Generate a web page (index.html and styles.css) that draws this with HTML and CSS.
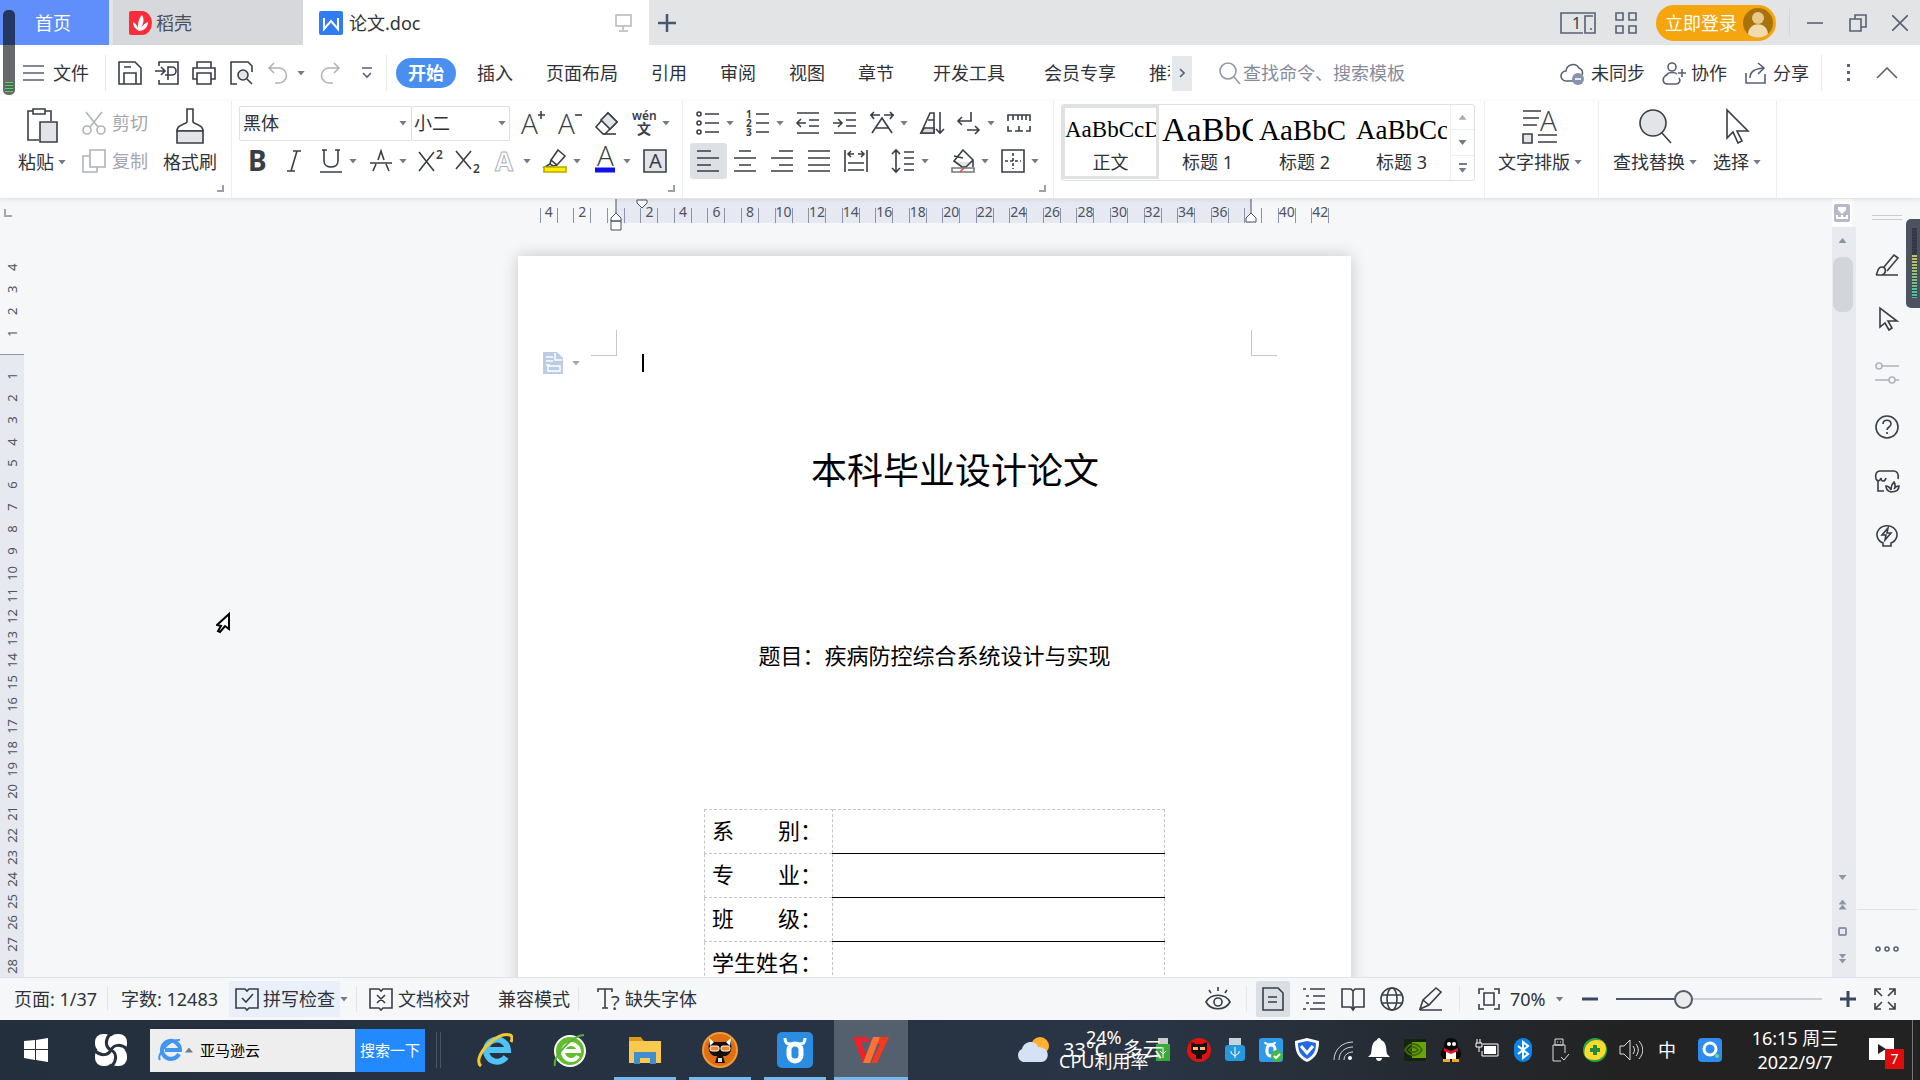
FILE: index.html
```html
<!DOCTYPE html>
<html lang="zh-CN">
<head>
  <meta charset="UTF-8">
  <meta name="viewport" content="width=device-width, initial-scale=1.0">
  <title>论文.doc</title>
  <link rel="stylesheet" href="styles.css">
</head>
<body>
  <!-- window tabs -->
  <header class="tabbar">
    <button type="button" class="tab home">首页</button>
    <button type="button" class="tab docer">
      <svg width="23" height="24" viewBox="0 0 23 24"><path d="M2 0h11a10 12 0 0 1 0 24H2a2 2 0 0 1-2-2V2a2 2 0 0 1 2-2z" fill="#fb2c3b"/><path d="M10 20C6 18 4 15 4 11c2 1 4 3 5 6 0-6 1-10 4-13 3 5 1 9-1 13 2-3 4-5 7-6 0 5-4 9-9 9z" fill="#fff"/></svg>
      稻壳
    </button>
    <button type="button" class="tab active">
      <svg width="24" height="24" viewBox="0 0 24 24"><rect width="24" height="24" rx="2" fill="#2f7df0"/><path d="M5 7v11l7-8 7 8V7" fill="none" stroke="#fff" stroke-width="2"/></svg>
      <span>论文.doc</span>
      <svg class="monitor" width="17" height="18" viewBox="0 0 17 18"><path d="M1 1h15v11H1zM8 12v4M4 17h9" fill="none" stroke="#b4b7bd" stroke-width="1.5"/></svg>
    </button>
    <button type="button" class="newtab" aria-label="新建">
      <svg width="18" height="18" viewBox="0 0 18 18"><path d="M9 0v18M0 9h18" stroke="#4a5670" stroke-width="2.5"/></svg>
    </button>
    <div class="window-tools">
      <button type="button" aria-label="窗口"><svg width="36" height="24" viewBox="0 0 36 24" class="line"><path d="M23 22H1V2h34v20H25V5h8M30 18h2"/><text x="12" y="18" class="t16">1</text></svg></button>
      <button type="button" class="grid" aria-label="应用"><svg width="22" height="22" viewBox="0 0 22 22" class="line"><path d="M1 1h7v7H1zM14 1h7v7h-7zM1 14h7v7H1zM14 14h7v7h-7z"/></svg></button>
      <button type="button" class="login">立即登录
        <svg width="30" height="30" viewBox="0 0 30 30"><circle cx="15" cy="15" r="15" fill="#a8730a"/><circle cx="15" cy="10" r="6" fill="#e9c98a"/><path d="M5 26c1-13 19-13 20 0a15 15 0 0 1-20 0z" fill="#f2dcae"/></svg>
      </button>
      <button type="button" class="minimize" aria-label="最小化"><svg width="16" height="20" viewBox="0 0 16 20" class="line"><path d="M0 10h16"/></svg></button>
      <button type="button" class="restore" aria-label="还原"><svg width="18" height="20" viewBox="0 0 18 20" class="line"><path d="M1 6h11v12H1zM6 6V2h11v12h-5"/></svg></button>
      <button type="button" class="close" aria-label="关闭"><svg width="16" height="16" viewBox="0 0 16 16" class="line"><path d="M0 0l16 16M16 0L0 16"/></svg></button>
    </div>
  </header>

  <!-- menu -->
  <nav class="menubar">
    <button type="button" class="file">
      <svg width="21" height="16" viewBox="0 0 21 16" class="line"><path d="M0 1h21M0 8h21M0 15h21"/></svg>
      文件
    </button>
    <div class="quick">
      <button type="button" aria-label="保存"><svg class="ic" viewBox="0 0 24 24"><path d="M1 1h16l6 6v16H1zM6 23V12h12v11M6 6h7"/></svg></button>
      <button type="button" aria-label="输出为PDF"><svg class="ic" viewBox="0 0 24 24"><path d="M4 5V1h19v22H4v-4M0 10h9M6 6l4 4-4 4M13 19V6h4a4 4 0 0 1 0 8h-7"/></svg></button>
      <button type="button" aria-label="打印"><svg class="ic" viewBox="0 0 24 24"><path d="M5 7V1h14v6M5 18H1V7h22v11h-4M5 12h14v11H5z"/></svg></button>
      <button type="button" aria-label="打印预览"><svg class="ic" viewBox="0 0 24 24"><path d="M8 23H2V1h17l4 4v6M18 18l5 5"/><circle cx="14" cy="14" r="5" fill="#e2e4e8"/></svg></button>
      <button type="button" class="undo" aria-label="撤销"><svg class="ic off" viewBox="0 0 24 24"><path d="M8 2L3 7l5 5M3 7h10a7 7 0 0 1 0 15H9"/></svg></button>
      <i class="caret"></i>
      <button type="button" class="redo" aria-label="恢复"><svg class="ic off" viewBox="0 0 24 24"><path d="M16 2l5 5-5 5M21 7H11a7 7 0 0 0 0 15h4"/></svg></button>
      <button type="button" class="more" aria-label="自定义"><svg width="12" height="12" viewBox="0 0 12 12" class="line"><path d="M1 1h10M2 6l4 4 4-4"/></svg></button>
    </div>
    <div class="menus">
      <button type="button" class="current">开始</button>
      <button type="button">插入</button>
      <button type="button">页面布局</button>
      <button type="button">引用</button>
      <button type="button">审阅</button>
      <button type="button">视图</button>
      <button type="button">章节</button>
      <button type="button" class="wide">开发工具</button>
      <button type="button" class="wide">会员专享</button>
      <button type="button" class="cut">推荐</button>
      <button type="button" class="next" aria-label="更多选项卡"><svg width="6" height="10" viewBox="0 0 6 10" class="line"><path d="M1 1l4 4-4 4"/></svg></button>
    </div>
    <div class="finder">
      <svg width="22" height="24" viewBox="0 0 22 24" class="line"><circle cx="9" cy="10" r="8"/><path d="M15 16l6 7"/></svg>
      <input type="text" aria-label="查找" placeholder="查找命令、搜索模板">
    </div>
    <div class="cloud">
      <button type="button"><svg width="26" height="24" viewBox="0 0 26 24" class="line"><path d="M13 20H6a5 5 0 0 1 0-10 7 7 0 0 1 13-3 5 5 0 0 1 3 7"/><circle cx="18" cy="18" r="6" fill="#8593ad" stroke="none"/><path d="M15 18h6" stroke="#fff"/></svg>未同步</button>
      <button type="button"><svg width="24" height="24" viewBox="0 0 24 24" class="line"><circle cx="10" cy="6" r="4"/><path d="M5 13c2-2 8-2 10 0M17 17c2 3 0 6-3 6H5c-4 0-5-5-2-8l3-2M16 12h8M20 8v8"/></svg>协作</button>
      <button type="button"><svg width="24" height="24" viewBox="0 0 24 24" class="line"><path d="M2 12v10h19V13M6 17c0-7 5-9 13-10M14 2l6 5-6 6"/></svg>分享</button>
    </div>
    <div class="fold">
      <button type="button" aria-label="更多"><svg width="4" height="20" viewBox="0 0 4 20"><path d="M1 1h3v3H1zM1 8h3v3H1zM1 15h3v3H1z" fill="#5b6270"/></svg></button>
      <button type="button" aria-label="收起功能区"><svg width="22" height="12" viewBox="0 0 22 12" class="line"><path d="M1 11L11 1l10 10"/></svg></button>
    </div>
  </nav>

  <!-- ribbon -->
  <section class="ribbon">
    <div class="group clipboard">
      <button type="button" class="big">
        <svg width="36" height="36" viewBox="0 0 36 36" class="ico"><path d="M9 3H4v29h11M21 3h6v10"/><path d="M9 1h12v5H9z"/><path d="M16 14h17v20H16z" fill="#e2e4e8"/></svg>
        <span>粘贴<i class="caret"></i></span>
      </button>
      <div class="pair">
        <button type="button"><svg class="ic off" viewBox="0 0 24 24"><circle cx="5" cy="19" r="4"/><circle cx="19" cy="19" r="4"/><path d="M4 1l12 15M20 1L8 16"/></svg>剪切</button>
        <button type="button"><svg class="ic off" viewBox="0 0 24 24"><path d="M8 1h15v17H8zM8 7H1v16h14v-5"/></svg>复制</button>
      </div>
      <button type="button" class="big">
        <svg width="36" height="36" viewBox="0 0 36 36" class="ico"><path d="M15 1h6v13c2 3 10 2 10 9H5c0-7 8-6 10-9z"/><path d="M5 23h26v12H5z" fill="#e2e4e8"/></svg>
        <span>格式刷</span>
      </button>
      <i class="corner"></i>
    </div>

    <div class="group font">
      <div class="tools">
        <div class="combo name"><select aria-label="字体"><option>黑体</option></select><i class="caret"></i></div>
        <div class="combo size"><select aria-label="字号"><option>小二</option></select><i class="caret"></i></div>
        <button type="button" class="tool" aria-label="增大字号"><svg class="ic" viewBox="0 0 24 24"><text x="0" y="23" class="thin">A</text><path d="M17 4h7M20 0v8"/></svg></button>
        <button type="button" class="tool" aria-label="减小字号"><svg class="ic" viewBox="0 0 24 24"><text x="0" y="23" class="thin">A</text><path d="M17 4h7"/></svg></button>
        <button type="button" class="tool" aria-label="清除格式"><svg class="ic" viewBox="0 0 24 24"><path d="M13 2l9 9-12 12H8l-7-7z"/><path d="M13 2l9 9-7 7-9-9z" fill="#e2e4e8"/><path d="M8 23h13"/></svg></button>
        <button type="button" class="tool drop" aria-label="拼音指南"><svg class="ic" viewBox="0 0 24 24"><text x="0" y="9" class="t12">wén</text><text x="5" y="23" class="t14">文</text></svg><i class="caret"></i></button>
      </div>
      <div class="tools">
        <button type="button" class="tool" aria-label="加粗"><svg class="ic" viewBox="0 0 24 24"><text x="3" y="22" class="bold">B</text></svg></button>
        <button type="button" class="tool" aria-label="倾斜"><svg class="ic" viewBox="0 0 24 24"><path d="M11 2h8M5 22h8M15 2L9 22"/></svg></button>
        <button type="button" class="tool drop" aria-label="下划线"><svg class="ic" viewBox="0 0 24 24"><path d="M3 1h5M16 1h5M5 1v11c0 8 14 8 14 0V1M1 23h22"/></svg><i class="caret"></i></button>
        <button type="button" class="tool drop" aria-label="删除线"><svg class="ic" viewBox="0 0 24 24"><path d="M4 22l3-7M17 15l3 7M9 11l3-9 3 9M1 14h22"/></svg><i class="caret"></i></button>
        <button type="button" class="tool" aria-label="上标"><svg class="ic" viewBox="0 0 24 24"><path d="M0 3l15 19M15 3L0 22"/><text x="17" y="10" class="t12">2</text></svg></button>
        <button type="button" class="tool" aria-label="下标"><svg class="ic" viewBox="0 0 24 24"><path d="M0 2l15 18M15 2L0 20"/><text x="17" y="24" class="t12">2</text></svg></button>
        <button type="button" class="tool drop" aria-label="文字效果"><svg class="ic" viewBox="0 0 24 24"><text x="2" y="22" class="outline">A</text></svg><i class="caret"></i></button>
        <button type="button" class="tool drop" aria-label="突出显示"><svg class="ic" viewBox="0 0 24 24"><path d="M15 1l7 6-8 9-6-5zM8 11l-1 4 3 2 4-1M7 15l-5 3h7"/><path d="M1 18h22v5H1z" fill="#ffee00" stroke="#b9a900"/></svg><i class="caret"></i></button>
        <button type="button" class="tool drop" aria-label="字体颜色"><svg class="ic" viewBox="0 0 24 24"><text x="4" y="17" class="thin">A</text><path d="M2 21h20" stroke="#1010e8" stroke-width="5"/></svg><i class="caret"></i></button>
        <button type="button" class="tool" aria-label="字符底纹"><svg class="ic" viewBox="0 0 24 24"><path d="M1 1h22v22H1z" fill="#e2e4e8"/><text x="6" y="19" class="t20">A</text></svg></button>
      </div>
      <i class="corner"></i>
    </div>

    <div class="group para">
      <div class="tools">
        <button type="button" class="tool drop" aria-label="项目符号"><svg class="ic" viewBox="0 0 24 24"><circle cx="3" cy="3" r="2"/><circle cx="3" cy="12" r="2"/><circle cx="3" cy="21" r="2"/><path d="M9 3h14M9 12h14M9 21h14"/></svg><i class="caret"></i></button>
        <button type="button" class="tool drop" aria-label="编号"><svg class="ic" viewBox="0 0 24 24"><text x="0" y="7" class="t10">1</text><text x="0" y="16" class="t10">2</text><text x="0" y="25" class="t10">3</text><path d="M10 3h13M10 12h13M10 21h13"/></svg><i class="caret"></i></button>
        <button type="button" class="tool" aria-label="减少缩进"><svg class="ic" viewBox="0 0 24 24"><path d="M1 2h22M13 9h10M13 15h10M1 22h22M1 12h9M5 8l-4 4 4 4"/></svg></button>
        <button type="button" class="tool" aria-label="增加缩进"><svg class="ic" viewBox="0 0 24 24"><path d="M1 2h22M13 9h10M13 15h10M1 22h22M0 12h9M5 8l4 4-4 4"/></svg></button>
        <button type="button" class="tool drop" aria-label="中文版式"><svg class="ic" viewBox="0 0 24 24"><path d="M0 4h10M4 1L1 4l3 4M14 4h10M20 1l3 3-3 4M2 22L12 7l10 15M6 17h12"/></svg><i class="caret"></i></button>
        <button type="button" class="tool" aria-label="排序"><svg class="ic" viewBox="0 0 24 24"><path d="M1 22L10 2h4v20z"/><path d="M4 17h10v5H1z" fill="#d5d8dd"/><path d="M8 9h6M20 1v21M16 18l4 4 4-4"/></svg></button>
        <button type="button" class="tool drop" aria-label="显示段落标记"><svg class="ic" viewBox="0 0 24 24"><path d="M14 1v9H1M5 6l-4 4 4 4M10 19h12M18 15l4 4-4 4"/></svg><i class="caret"></i></button>
        <button type="button" class="tool" aria-label="制表位"><svg class="ic" viewBox="0 0 24 24"><path d="M1 10V4h22v6M6 4v5M11 4v5M15 4v5M19 4v5M1 15v5h4M8 20h8M12 15v5M19 20h4v-5"/></svg></button>
      </div>
      <div class="tools">
        <button type="button" class="tool on" aria-label="左对齐"><svg class="ic" viewBox="0 0 24 24"><path d="M1 2h14M1 9h22M1 16h14M1 22h22"/></svg></button>
        <button type="button" class="tool" aria-label="居中对齐"><svg class="ic" viewBox="0 0 24 24"><path d="M6 2h12M1 9h22M6 16h12M1 22h22"/></svg></button>
        <button type="button" class="tool" aria-label="右对齐"><svg class="ic" viewBox="0 0 24 24"><path d="M9 2h14M1 9h22M9 16h14M1 22h22"/></svg></button>
        <button type="button" class="tool" aria-label="两端对齐"><svg class="ic" viewBox="0 0 24 24"><path d="M1 2h22M1 9h22M1 16h22M1 22h22"/></svg></button>
        <button type="button" class="tool" aria-label="分散对齐"><svg class="ic" viewBox="0 0 24 24"><path d="M1 1v22M23 1v22M4 5h6M7 2L4 5l3 3M14 5h6M17 2l3 3-3 3M4 14h16M4 21h16"/></svg></button>
        <i class="bar"></i>
        <button type="button" class="tool drop" aria-label="行距"><svg class="ic" viewBox="0 0 24 24"><path d="M5 1v22M1 5l4-4 4 4M1 19l4 4 4-4M13 3h10M13 9h10M13 15h10M13 21h10"/></svg><i class="caret"></i></button>
        <i class="bar"></i>
        <button type="button" class="tool drop" aria-label="底纹颜色"><svg class="ic" viewBox="0 0 24 24"><path d="M5 13h17l-7 5h-5z" fill="#e2e4e8" stroke="none"/><path d="M12 1l10 10-7 7h-4l-8-6zM3 7l9 2M22 11v7"/><path d="M1 19h22v4H1z" fill="#fff" stroke="#777"/><path d="M9 23l4-4" stroke="#e04848"/></svg><i class="caret"></i></button>
        <button type="button" class="tool drop" aria-label="边框"><svg class="ic" viewBox="0 0 24 24"><path d="M1 1h22v22H1z"/><path d="M12 4v16M4 12h16" stroke-dasharray="3 2"/></svg><i class="caret"></i></button>
      </div>
      <i class="corner"></i>
    </div>

    <div class="group styles">
      <div class="gallery">
        <button type="button" class="style chosen"><b class="s1">AaBbCcDd</b><span>正文</span></button>
        <button type="button" class="style"><b class="s2">AaBbCc</b><span>标题 1</span></button>
        <button type="button" class="style"><b class="s3">AaBbC</b><span>标题 2</span></button>
        <button type="button" class="style"><b class="s4">AaBbCc</b><span>标题 3</span></button>
        <div class="spin">
          <button type="button" aria-label="上一行"><i class="caret up"></i></button>
          <button type="button" aria-label="下一行"><i class="caret"></i></button>
          <button type="button" class="all" aria-label="全部样式"><i class="caret"></i></button>
        </div>
      </div>
    </div>

    <div class="group layout">
      <button type="button" class="big">
        <svg width="36" height="36" viewBox="0 0 36 36" class="ico"><path d="M1 3h18M1 10h16M1 17h14M16 27h19M16 34h19"/><path d="M1 26h9v9H1z" fill="#e2e4e8"/><text x="18" y="23" class="thin">A</text></svg>
        <span>文字排版<i class="caret"></i></span>
      </button>
    </div>
    <div class="group edit">
      <button type="button" class="big">
        <svg width="36" height="36" viewBox="0 0 36 36" class="ico"><circle cx="16" cy="15" r="13" fill="#e2e4e8"/><path d="M25 25l9 10"/></svg>
        <span>查找替换<i class="caret"></i></span>
      </button>
      <button type="button" class="big">
        <svg width="36" height="36" viewBox="0 0 36 36" class="ico"><path d="M8 2v28l6-6 5 11 4-2-5-10h11z"/></svg>
        <span>选择<i class="caret"></i></span>
      </button>
    </div>
  </section>

  <!-- document -->
  <main class="editor">
    <div class="vruler">
      <svg width="8" height="8" viewBox="0 0 8 8"><path d="M1 0v7h7" fill="none" stroke="#a3a7b0" stroke-width="2"/></svg>
      <div class="outer"><span>4</span><span>3</span><span>2</span><span>1</span></div>
      <div class="inner">
        <span>1</span><span>2</span><span>3</span><span>4</span><span>5</span><span>6</span><span>7</span>
        <span>8</span><span>9</span><span>10</span><span>11</span><span>12</span><span>13</span><span>14</span>
        <span>15</span><span>16</span><span>17</span><span>18</span><span>19</span><span>20</span><span>21</span>
        <span>22</span><span>23</span><span>24</span><span>25</span><span>26</span><span>27</span><span>28</span>
      </div>
    </div>

    <div class="canvas">
      <div class="hruler">
        <span>4</span><span>2</span><span></span><span>2</span><span>4</span><span>6</span><span>8</span><span>10</span>
        <span>12</span><span>14</span><span>16</span><span>18</span><span>20</span><span>22</span><span>24</span><span>26</span>
        <span>28</span><span>30</span><span>32</span><span>34</span><span>36</span><span></span><span>40</span><span>42</span>
        <svg class="mark left" width="12" height="32" viewBox="0 0 12 32"><path d="M6 0v15M1 22v-3l5-5 5 5v3zM1 22h10v9H1z"/></svg>
        <svg class="mark first" width="12" height="10" viewBox="0 0 12 10"><path d="M1 1h10v3L6 9 1 4z"/></svg>
        <svg class="mark right" width="12" height="24" viewBox="0 0 12 24"><path d="M6 0v15M1 23v-4l5-5 5 5v4z"/></svg>
      </div>
      <article class="page">
        <i class="crop tl"></i><i class="crop tr"></i>
        <button type="button" class="outline-btn" aria-label="目录">
          <svg width="20" height="22" viewBox="0 0 20 22"><path d="M0 0h14l6 6v16H0z" fill="#bccbe6"/><path d="M3 5h7M3 9h7M3 13h4M12 1v7h7M5 14h12v5H5z" fill="none" stroke="#fff" stroke-width="1.5"/></svg>
          <i class="caret"></i>
        </button>
        <i class="beam"></i>
        <h1>本科毕业设计论文</h1>
        <p>题目：疾病防控综合系统设计与实现</p>
        <table>
          <tr><th><div><span>系</span><span>别：</span></div></th><td></td></tr>
          <tr><th><div><span>专</span><span>业：</span></div></th><td></td></tr>
          <tr><th><div><span>班</span><span>级：</span></div></th><td></td></tr>
          <tr><th><div><span>学生姓名：</span></div></th><td></td></tr>
        </table>
      </article>
    </div>

    <div class="scroll">
      <button type="button" class="ruler-btn" aria-label="标尺"><svg width="16" height="18" viewBox="0 0 16 18"><rect width="16" height="18" rx="2" fill="#b5b9ca"/><path d="M4 3h8v3l-4 4-4-4zM2 11h2v2h3v-2h2v2h3v-2h2v4H2z" fill="#fff"/></svg></button>
      <div class="track">
        <button type="button" aria-label="向上"><i class="caret up"></i></button>
        <div class="thumb"></div>
        <div class="jump">
          <button type="button" aria-label="向下"><i class="caret"></i></button>
          <button type="button" aria-label="前一页"><i class="caret up"></i><i class="caret up"></i></button>
          <button type="button" aria-label="选择浏览对象"><i class="box"></i></button>
          <button type="button" aria-label="下一页"><i class="caret"></i><i class="caret"></i></button>
        </div>
      </div>
    </div>

    <aside class="side">
      <i class="grip"></i>
      <button type="button" aria-label="样式"><svg class="ic" viewBox="0 0 24 24"><path d="M1 22h22M1 22c2-2 1-8 6-8 4 0 5 6 0 8M9 14L19 2l4 3-11 13"/></svg></button>
      <button type="button" aria-label="选择"><svg class="ic" viewBox="0 0 24 24"><path d="M5 1v19l5-4 4 7 3-2-4-7h9z"/></svg></button>
      <button type="button" aria-label="属性"><svg class="ic off" viewBox="0 0 24 24"><circle cx="4" cy="5" r="3"/><circle cx="17" cy="19" r="3"/><path d="M7 5h17M0 19h14M20 19h4"/></svg></button>
      <button type="button" aria-label="帮助"><svg class="ic" viewBox="0 0 24 24"><circle cx="12" cy="12" r="11"/><path d="M8 9c0-5 8-5 8 0 0 3-4 3-4 6M12 17v2"/></svg></button>
      <button type="button" aria-label="稻壳资源"><svg class="ic" viewBox="0 0 24 24"><path d="M3 12v10h6M23 10c1-5-1-8-4-8H5C1 2 0 6 1 10c2 3 4 2 5-1 0 4 4 4 5 0M16 23c-4-1-5-4-5-6 3 0 4 2 5 4 0-4 1-6 3-8 2 3 1 6 0 7 1-2 2-3 5-3 0 4-3 6-8 6z"/></svg></button>
      <button type="button" aria-label="推荐"><svg class="ic" viewBox="0 0 24 24"><path d="M8 20a10 9 0 1 1 8 0v3H8zM13 5l-6 7h4l-1 5 6-7h-4z"/></svg></button>
      <button type="button" class="dots" aria-label="更多"><svg width="26" height="8" viewBox="0 0 26 8" class="line"><circle cx="4" cy="4" r="2"/><circle cx="13" cy="4" r="2"/><circle cx="22" cy="4" r="2"/></svg></button>
    </aside>
  </main>

  <!-- status bar -->
  <footer class="status">
    <span class="page-no">页面: 1/37</span>
    <span class="words">字数: 12483</span>
    <button type="button" class="spell"><svg class="ic" viewBox="0 0 24 24"><path d="M1 2h9l2 2 2-2h9v19h-9l-2 2-2-2H1zM7 11l4 4 7-8"/></svg>拼写检查</button>
    <i class="caret"></i>
    <button type="button" class="proof"><svg class="ic" viewBox="0 0 24 24"><path d="M1 2h9l2 2 2-2h9v19h-9l-2 2-2-2H1zM8 8l8 8M16 8l-8 8"/></svg>文档校对</button>
    <span class="compat">兼容模式</span>
    <button type="button" class="missing"><svg class="ic" viewBox="0 0 24 24"><path d="M1 5V2h14v3M8 2v19M5 21h6"/><text x="14" y="23" class="t20">?</text></svg>缺失字体</button>

    <div class="views">
      <button type="button" aria-label="护眼模式"><svg class="ic" viewBox="0 0 24 24"><path d="M0 15c5-9 19-9 24 0-5 9-19 9-24 0zM3 3l2 3M12 0v4M21 3l-2 3"/><circle cx="12" cy="15" r="4"/></svg></button>
      <i class="bar"></i>
      <button type="button" class="on" aria-label="页面视图"><svg class="ic" viewBox="0 0 24 24"><path d="M2 1h15l5 5v17H2zM7 10h9M7 15h9"/></svg></button>
      <button type="button" aria-label="大纲"><svg class="ic" viewBox="0 0 24 24"><path d="M1 2h3M8 2h15M4 9h3M11 9h12M4 16h3M11 16h12M1 22h3M8 22h15"/></svg></button>
      <button type="button" aria-label="阅读版式"><svg class="ic" viewBox="0 0 24 24"><path d="M1 2h9l2 2 2-2h9v18h-9l-2 3-2-3H1zM12 4v18"/></svg></button>
      <button type="button" aria-label="Web版式"><svg class="ic" viewBox="0 0 24 24"><circle cx="12" cy="12" r="11"/><ellipse cx="12" cy="12" rx="5" ry="11"/><path d="M2 8h20M2 16h20"/></svg></button>
      <button type="button" aria-label="写作模式"><svg class="ic" viewBox="0 0 24 24"><path d="M1 23h22M1 22l3-9L17 1l5 4L10 18zM4 13l6 5"/></svg></button>
      <i class="bar"></i>
      <button type="button" aria-label="最佳显示比例"><svg class="ic" viewBox="0 0 24 24"><path d="M2 7V2h5M17 2h5v5M22 17v5h-5M7 22H2v-5M7 6h10v12H7z"/></svg></button>
    </div>
    <button type="button" class="percent">70%<i class="caret"></i></button>
    <button type="button" class="zoom-btn" aria-label="缩小"><svg width="16" height="16" viewBox="0 0 16 16"><path d="M0 8h16" stroke="#3b4762" stroke-width="3"/></svg></button>
    <input type="range" aria-label="显示比例" min="0" max="100" value="31">
    <button type="button" class="zoom-btn" aria-label="放大"><svg width="16" height="16" viewBox="0 0 16 16"><path d="M0 8h16M8 0v16" stroke="#3b4762" stroke-width="3"/></svg></button>
    <button type="button" class="expand" aria-label="全屏"><svg class="ic" viewBox="0 0 24 24"><path d="M2 8V2h6M2 2l7 7M16 2h6v6M22 2l-7 7M22 16v6h-6M22 22l-7-7M8 22H2v-6M2 22l7-7"/></svg></button>
  </footer>

  <!-- windows taskbar -->
  <div class="taskbar">
    <button type="button" class="start" aria-label="开始"><svg width="24" height="24" viewBox="0 0 24 24"><path d="M0 3l11-1v9H0zM12 2l12-2v11H12zM0 12h11v10L0 20zM12 12h12v12l-12-2z" fill="#fff"/></svg></button>
    <button type="button" class="swirl" aria-label="助手">
      <svg width="34" height="34" viewBox="0 0 34 34">
        <rect x="1" y="1" width="18" height="18" rx="8" fill="#fff"/><rect x="15" y="1" width="18" height="18" rx="8" fill="#fff"/>
        <rect x="1" y="15" width="18" height="18" rx="8" fill="#fff"/><rect x="15" y="15" width="18" height="18" rx="8" fill="#fff"/>
        <path d="M17 17c-6-3-6-10-1-16M17 17c3-6 10-6 16-1M17 17c6 3 6 10 1 16M17 17c-3 6-10 6-16 1" fill="none" stroke="#263241" stroke-width="3"/>
      </svg>
    </button>
    <form class="search">
      <svg width="24" height="24" viewBox="0 0 24 24"><path d="M21 16a9 9 0 1 1 1-4H7" fill="none" stroke="#3f97f2" stroke-width="4"/><path d="M2 22C-2 17 11 1 22 2" fill="none" stroke="#3f97f2" stroke-width="2"/></svg>
      <i class="caret up"></i>
      <input type="text" aria-label="搜索" value="亚马逊云">
      <button type="button">搜索一下</button>
    </form>
    <i class="split"></i>
    <div class="apps">
      <button type="button" aria-label="Internet Explorer"><svg width="36" height="36" viewBox="0 0 36 36"><path d="M29 25a11 11 0 1 1 2-7H11" fill="none" stroke="#4fc3f3" stroke-width="6"/><path d="M4 34C-6 26 20-2 33 3c3 1 2 5 1 7" fill="none" stroke="#f6c62f" stroke-width="3"/></svg></button>
      <button type="button" aria-label="浏览器"><svg width="36" height="36" viewBox="0 0 36 36"><circle cx="18" cy="19" r="15" fill="#62bf2b" stroke="#fff" stroke-width="2"/><path d="M26 24a8 8 0 1 1 1-5H12" fill="none" stroke="#fff" stroke-width="4"/><path d="M3 34C0 25 21 3 32 3" fill="none" stroke="#56b13a" stroke-width="2"/></svg></button>
      <button type="button" class="open" aria-label="文件资源管理器"><svg width="36" height="36" viewBox="0 0 36 36"><path d="M2 6h12l3 3h17v22H2z" fill="#fbc94f"/><path d="M2 5h12l2 4H2z" fill="#dc9a16"/><path d="M7 32V20h22v12h-6v-6H13v6z" fill="#3f8fd0"/></svg></button>
      <button type="button" class="open" aria-label="录屏"><svg width="36" height="36" viewBox="0 0 36 36"><circle cx="18" cy="18" r="17" fill="#e0700f" stroke="#f59a3a" stroke-width="2"/><path d="M8 8l5 2h10l5-2c3 8 1 14-4 16h-3l2 7H13l2-7h-3C7 22 5 16 8 8z" fill="#15100d"/><path d="M7 6l5 4-4 4zM29 6l-5 4 4 4z" fill="#fff"/><rect x="8" y="14" width="9" height="5" rx="2" fill="#f58a2c" stroke="#fff"/><rect x="19" y="14" width="9" height="5" rx="2" fill="#f58a2c" stroke="#fff"/><path d="M16 26h4v4h-4z" fill="#ddd"/></svg></button>
      <button type="button" class="open" aria-label="驱动"><svg width="36" height="36" viewBox="0 0 36 36"><rect width="36" height="36" rx="5" fill="#2b8de2"/><path d="M8 6c0 5 2 6 5 6h10c3 0 5-1 5-6" fill="none" stroke="#fff" stroke-width="3"/><rect x="12" y="12" width="12" height="17" rx="6" fill="none" stroke="#fff" stroke-width="5"/></svg></button>
      <button type="button" class="open focus" aria-label="WPS"><svg width="36" height="36" viewBox="0 0 36 36"><path d="M0 5h14l3 5h-9l5 12-3 9z" fill="#f0212a"/><path d="M24 5h12L24 31h-6l9-19h-4z" fill="#f5391f"/><path d="M20 5h7L17 31h-7z" fill="#ff7235"/></svg></button>
    </div>
    <div class="weather">
      <svg width="34" height="28" viewBox="0 0 34 28"><circle cx="24" cy="10" r="9" fill="#ffb02e"/><path d="M7 26a7 7 0 0 1-1-13c2-9 14-9 16-2 13 0 12 15 3 15z" fill="#d5e1f5"/></svg>
      <span class="temp">33°C&nbsp;&nbsp; 多云</span>
      <div class="cpu"><span>24%</span><span>CPU利用率</span></div>
    </div>
    <div class="tray">
      <button type="button" aria-label="USB"><svg viewBox="0 0 24 24"><path d="M7 0h10v6H7z" fill="#ccc"/><path d="M5 6h14v17H5z" fill="#3aa83a"/><path d="M12 9v11M9 13l3 3 3-3" fill="none" stroke="#fff"/></svg></button>
      <button type="button" aria-label="录屏"><svg viewBox="0 0 24 24"><circle cx="12" cy="12" r="12" fill="#e5110e"/><path d="M4 4l5 2h6l5-2v7c0 5-3 5-5 6v4H9v-4c-2-1-5-1-5-6z" fill="#15100d"/><path d="M6 9h5v3H6zM13 9h5v3h-5z" fill="#ffb765"/></svg></button>
      <button type="button" aria-label="U盘"><svg viewBox="0 0 24 24"><path d="M6 0h12v7H6z" fill="#c5d3dd"/><rect x="2" y="7" width="20" height="16" rx="3" fill="#2698de"/><path d="M12 9v11M8 13v2l4 3 4-3v-2" fill="none" stroke="#fff"/></svg></button>
      <button type="button" aria-label="驱动"><svg viewBox="0 0 24 24"><rect width="24" height="24" rx="3" fill="#2d9be9"/><path d="M6 4c0 3 10 3 10 0" fill="none" stroke="#fff" stroke-width="2"/><rect x="8" y="7" width="8" height="11" rx="4" fill="none" stroke="#fff" stroke-width="3"/><circle cx="18" cy="18" r="6" fill="#42b649"/><path d="M15 18l2 2 4-4" fill="none" stroke="#fff" stroke-width="2"/></svg></button>
      <button type="button" aria-label="安全"><svg viewBox="0 0 24 24"><path d="M12 0l12 3c0 11-3 17-12 21C3 20 0 14 0 3z" fill="#fff"/><path d="M12 3l9 2c0 8-2 12-9 16C5 17 3 13 3 5z" fill="#2469e5"/><path d="M6 8l6 7 6-7" fill="none" stroke="#fff" stroke-width="3"/></svg></button>
      <button type="button" aria-label="无线网络"><svg viewBox="0 0 24 24"><path d="M3 22C3 12 11 4 22 4M8 22c0-8 6-13 14-13M13 22c0-5 4-8 9-8" fill="none" stroke="#d5d8dc"/><circle cx="19" cy="20" r="2" fill="#fff"/></svg></button>
      <button type="button" aria-label="通知"><svg viewBox="0 0 24 24"><path d="M12 0c1 0 2 1 2 2 6 2 5 10 6 14l3 3H1l3-3c1-4 0-12 6-14 0-1 1-2 2-2zM9 20h6c0 4-6 4-6 0z" fill="#fff"/></svg></button>
      <button type="button" aria-label="NVIDIA"><svg viewBox="0 0 24 24"><path d="M1 1h22v22H1z" fill="#15240f"/><path d="M9 4h14v16H9z" fill="#68a500"/><path d="M2 12c5-8 12-8 17 0-5 7-12 7-17 0zM6 12c3-4 6-4 9 0-3 3-6 3-9 0z" fill="none" stroke="#42680c" stroke-width="2"/></svg></button>
      <button type="button" aria-label="QQ"><svg viewBox="0 0 24 24"><path d="M12 0c6 0 7 5 7 9 4 6 4 8 2 10l-3 4H6l-3-4c-2-2-2-4 2-10 0-4 1-9 7-9z" fill="#0a0a0a"/><path d="M7 13h10v8H7z" fill="#fff"/><path d="M5 10l7 3 7-3v3l-7 3-7-3z" fill="#e8131b"/><circle cx="10" cy="6" r="2" fill="#fff"/><circle cx="15" cy="6" r="2" fill="#fff"/><path d="M4 21h7v3H4zM13 21h7v3h-7z" fill="#f5a91d"/></svg></button>
      <button type="button" aria-label="电池"><svg viewBox="0 0 24 24"><path d="M8 6h15v12H7v-5M2 1v4M5 1v4M1 5h6v4H1zM4 9v5" fill="none" stroke="#fff"/><path d="M9 8h12v8H9z" fill="#fff"/></svg></button>
      <button type="button" aria-label="蓝牙"><svg viewBox="0 0 24 24"><rect x="3" width="18" height="24" rx="9" fill="#0a84e8"/><path d="M7 8l10 8-5 4V4l5 4-10 8" fill="none" stroke="#fff" stroke-width="2"/></svg></button>
      <button type="button" aria-label="弹出硬件"><svg viewBox="0 0 24 24"><path d="M8 1h8v6H8zM14 23H6V7h12v8M14 19l3 3 5-6M10 4h1M13 4h1" fill="none" stroke="#ddd"/></svg></button>
      <button type="button" aria-label="杀毒"><svg viewBox="0 0 24 24"><circle cx="12" cy="12" r="12" fill="#29a546"/><path d="M2 18C-1 8 8-1 19 3c8 6 3 19-7 19-4 0-8-1-10-4z" fill="#ffd92e"/><path d="M12 7v10M7 12h10" stroke="#218b38" stroke-width="4"/></svg></button>
      <button type="button" aria-label="音量"><svg viewBox="0 0 24 24"><path d="M1 8h4l6-6v20l-6-6H1zM14 8c2 3 2 5 0 8M17 6c3 4 3 8 0 12M20 3c5 6 5 12 0 18" fill="none" stroke="#ddd"/></svg></button>
      <button type="button" class="ime">中</button>
      <button type="button" class="qpin" aria-label="Q"><svg viewBox="0 0 24 24"><rect width="24" height="24" rx="4" fill="#2e8bf0"/><circle cx="12" cy="11" r="6" fill="none" stroke="#fff" stroke-width="3"/><circle cx="19" cy="18" r="2" fill="#63e66b"/></svg></button>
    </div>
    <div class="clock"><span>16:15 周三</span><span>2022/9/7</span></div>
    <button type="button" class="notice" aria-label="通知中心">
      <svg width="26" height="24" viewBox="0 0 26 24"><path d="M0 0h25v22H0z" fill="#fff"/><path d="M9 6l8 5-8 5z" fill="#222"/></svg>
      <span class="badge">7</span>
    </button>
  </div>

  <!-- floating level meters and pointer -->
  <div class="meter-left"><i></i></div>
  <div class="meter-right"><i></i></div>
  <svg class="pointer" width="16" height="22" viewBox="0 0 16 22"><path d="M13 2v15l-4-3-5 6-2-1 3-5-4-1z" fill="#fff" stroke="#000" stroke-width="2"/></svg>
</body>
</html>
```

FILE: styles.css
```css
* {
  box-sizing: border-box;
}

body {
  margin: 0;
  height: 100vh;
  display: flex;
  flex-direction: column;
  overflow: hidden;
  font-family: "Noto Sans", "Noto Sans CJK SC", sans-serif;
  font-size: 18px;
  line-height: 24px;
  color: #2f3339;
  background: #f5f7f9;
}

button, input, select {
  font: inherit;
  color: inherit;
  background: none;
  border: none;
  padding: 0;
  margin: 0;
  outline: none;
}

button {
  display: flex;
  align-items: center;
  flex: none;
  white-space: nowrap;
}

svg {
  display: block;
  flex: none;
}

.ic, .ico {
  fill: none;
  stroke: #3a3e46;
  stroke-width: 1.6;
}

.ic {
  width: 24px;
  height: 24px;
  overflow: visible;
}

.line {
  fill: none;
  stroke: #586074;
  stroke-width: 1.6;
}

.off {
  stroke: #b0b3b9;
}

svg text {
  fill: #3a3e46;
  stroke: none;
}

.thin {
  font: 300 28px "Open Sans", sans-serif;
}

.bold {
  font: 700 28px "Noto Sans", sans-serif;
}

svg .outline {
  font: 700 26px "Noto Sans", sans-serif;
  fill: #fff;
  stroke: #b0b3b9;
  stroke-width: 1;
}

.t10 { font-size: 10px; font-weight: 700; }
.t12 { font-size: 12px; font-weight: 600; }
.t14 { font-size: 14px; font-weight: 600; }
.t16 { font-size: 16px; }
.t20 { font-size: 20px; }

.caret {
  display: inline-block;
  flex: none;
  width: 8px;
  height: 5px;
  background: #747a88;
  clip-path: polygon(0 0, 100% 0, 50% 100%);
}

.caret.up {
  clip-path: polygon(50% 0, 100% 100%, 0 100%);
}

/* tabs */
.tabbar {
  display: flex;
  flex: none;
  height: 45px;
  background: #e2e4e6;
}

.tab {
  height: 45px;
}

.home {
  width: 109px;
  padding-left: 35px;
  margin-right: 4px;
  color: #fff;
  background: #608efb;
}

.docer {
  width: 190px;
  padding-left: 16px;
  gap: 4px;
  background: #d6d8dc;
  color: #4b4f57;
}

.active {
  width: 346px;
  padding: 0 17px 0 16px;
  gap: 6px;
  background: #fff;
}

.monitor {
  margin-left: auto;
}

.newtab {
  width: 35px;
  justify-content: center;
}

.window-tools {
  display: flex;
  align-items: center;
  margin-left: auto;
  padding-right: 12px;
}

.grid {
  margin: 0 19px;
}

.login {
  height: 36px;
  width: 120px;
  padding: 0 3px 0 9px;
  gap: 6px;
  border-radius: 18px;
  background: #f5a50d;
  color: #fff;
}

.minimize {
  height: 28px;
  margin-left: 13px;
  padding-left: 17px;
  border-left: 1px solid #d3d6da;
}

.restore {
  margin: 0 25px 0 26px;
}

/* menu */
.menubar {
  display: flex;
  flex: none;
  align-items: center;
  height: 56px;
  background: #fff;
}

.file {
  width: 106px;
  height: 36px;
  padding-left: 23px;
  gap: 9px;
  border-right: 1px solid #e6e8eb;
}

.quick {
  display: flex;
  align-items: center;
  width: 281px;
  height: 36px;
  padding-left: 12px;
  gap: 13px;
  border-right: 1px solid #e6e8eb;
}

.quick .caret {
  margin: 0 0 0 -6px;
}

.quick .more {
  margin-left: 6px;
}

.menus {
  display: flex;
  align-items: center;
  gap: 33px;
  margin-left: 9px;
}

.menus .current {
  width: 60px;
  height: 30px;
  justify-content: center;
  margin-right: -12px;
  border-radius: 15px;
  font-weight: 700;
  color: #fff;
  background: #488ff0;
}

.menus .wide {
  margin-left: 6px;
}

.menus .cut {
  width: 21px;
  overflow: hidden;
}

.menus .next {
  width: 20px;
  height: 35px;
  margin-left: -31px;
  justify-content: center;
  background: #e6e9ec;
}

.finder {
  display: flex;
  align-items: center;
  gap: 2px;
  margin-left: 27px;
}

.finder .line {
  stroke: #9299a8;
}

.finder input {
  width: 180px;
}

.finder input::placeholder {
  color: #858c9c;
  opacity: 1;
}

.cloud {
  display: flex;
  gap: 17px;
  height: 36px;
  margin-left: auto;
  padding-right: 12px;
  border-right: 1px solid #e6e8eb;
}

.cloud button {
  gap: 5px;
}

.fold {
  display: flex;
  align-items: center;
  gap: 26px;
  padding: 0 22px 0 24px;
}

/* ribbon */
.ribbon {
  display: flex;
  flex: none;
  height: 98px;
  background: #fff;
  border-bottom: 1px solid #e2e4e7;
  box-shadow: 0 1px 4px rgba(0, 0, 0, 0.08);
  z-index: 2;
}

.group {
  position: relative;
  flex: none;
  padding: 3px 8px 0 7px;
  border-right: 1px solid #eceef0;
}

.corner {
  position: absolute;
  right: 7px;
  bottom: 6px;
  width: 7px;
  height: 7px;
  border: solid #9ba0aa;
  border-width: 0 2px 2px 0;
}

.clipboard {
  display: flex;
  width: 232px;
  padding-left: 18px;
}

.big {
  flex-direction: column;
  height: 76px;
  padding-top: 4px;
  gap: 6px;
}

.big span {
  display: flex;
  align-items: center;
  gap: 4px;
}

.pair {
  margin: 0 15px 0 16px;
}

.pair button {
  height: 38px;
  gap: 6px;
  color: #a4a7ad;
}

.font {
  width: 451px;
  padding-right: 0;
}

.para {
  width: 371px;
}

.tools {
  display: flex;
  align-items: center;
  height: 38px;
}

.tool {
  width: 37px;
  height: 36px;
  padding-left: 6px;
}

.drop {
  width: 50px;
  gap: 6px;
}

.tool.on {
  background: #dde1e5;
  border-radius: 3px;
}

.bar {
  width: 1px;
  height: 26px;
  margin: 0 5px;
  background: #e4e6e9;
}

.combo {
  display: flex;
  flex: none;
  align-items: center;
  height: 35px;
  border: 1px solid #dcdfe3;
  border-radius: 2px;
}

.combo select {
  flex: 1;
  min-width: 0;
  padding-left: 3px;
  appearance: none;
}

.name {
  width: 173px;
  padding-right: 4px;
}

.size {
  width: 98px;
  padding-right: 3px;
  margin-right: 5px;
  border-left: none;
}

.size select {
  padding-left: 2px;
}

.gallery {
  display: flex;
  width: 414px;
  height: 77px;
  border: 1px solid #dfe1e4;
  border-radius: 3px;
}

.styles {
  width: 431px;
}

.style {
  flex-direction: column;
  width: 97px;
  height: 74px;
  overflow: hidden;
  border: 3px solid transparent;
}

.style.chosen {
  border-color: #dfe1e3;
}

.style b {
  width: 91px;
  height: 42px;
  text-align: left;
  font-family: "Liberation Serif", serif;
  font-weight: 400;
  line-height: 44px;
  overflow: hidden;
  color: #000;
}

.s1 { font-size: 23px; }
.s2 { font-size: 34px; }
.s3 { font-size: 29px; }
.s4 { font-size: 27px; }

.spin {
  display: flex;
  flex-direction: column;
  width: 24px;
  border-left: 1px solid #eceef0;
}

.spin button {
  flex: 1;
  flex-direction: column;
  justify-content: center;
  border-bottom: 1px solid #eceef0;
}

.spin .up {
  background: #a9adb6;
}

.spin .all {
  border-bottom: none;
}

.spin .all::before {
  content: "";
  width: 8px;
  height: 2px;
  margin-bottom: 3px;
  background: #747a88;
}

.layout {
  width: 114px;
  padding-left: 13px;
}

.edit {
  display: flex;
  gap: 16px;
  width: 178px;
  padding-left: 14px;
}

/* editor */
.editor {
  display: flex;
  flex: 1;
  min-height: 0;
}

.vruler {
  display: flex;
  flex-direction: column;
  width: 24px;
  font-size: 13px;
  line-height: 16px;
  color: #4e5462;
}

.vruler svg {
  margin: 10px 0 0 4px;
}

.vruler span {
  display: flex;
  flex: 1;
  align-items: center;
  justify-content: center;
  writing-mode: vertical-rl;
  transform: rotate(180deg);
}

.outer, .inner {
  display: flex;
  flex-direction: column;
}

.outer {
  height: 88px;
  margin: 39px 0 10px;
}

.inner {
  flex: 1;
  padding-top: 10px;
  background: #e6e9ef;
  border-top: 1px solid #8d99a8;
}

.canvas {
  display: flex;
  flex: 1;
  flex-direction: column;
  align-items: center;
  padding-left: 13px;
  overflow: hidden;
}

.hruler {
  position: relative;
  display: grid;
  grid-template-columns: repeat(24, 1fr);
  flex: none;
  width: 805px;
  height: 24px;
  padding-top: 9px;
  background: linear-gradient(#e6e9f1, #e6e9f1) 84px 0 / 635px 24px no-repeat;
  font-size: 14px;
  line-height: 8px;
  color: #4e5462;
}

.hruler span {
  justify-self: center;
  width: 18px;
  border: solid #8c93a8;
  border-width: 0 1px;
  text-align: center;
}

.mark {
  position: absolute;
  top: 0;
  fill: #fff;
  stroke: #4b5160;
}

.mark.left { left: 78px; }
.mark.first { left: 104px; }
.mark.right { left: 713px; }

.page {
  position: relative;
  flex: none;
  width: 833px;
  height: 1178px;
  margin-top: 33px;
  background: #fff;
  box-shadow: 0 0 16px rgba(0, 0, 0, 0.2);
  color: #000;
}

.crop {
  position: absolute;
  top: 74px;
  width: 26px;
  height: 26px;
  border: solid #c3c6cb;
}

.tl {
  left: 73px;
  border-width: 0 1px 1px 0;
}

.tr {
  right: 74px;
  border-width: 0 0 1px 1px;
}

.outline-btn {
  position: absolute;
  left: 25px;
  top: 96px;
  gap: 9px;
}

.outline-btn .caret {
  background: #a3a6ac;
}

.beam {
  position: absolute;
  left: 124px;
  top: 98px;
  width: 2px;
  height: 18px;
  background: #000;
}

h1 {
  margin: 0;
  padding: 191px 0 0 41px;
  text-align: center;
  font-size: 36px;
  font-weight: 400;
  line-height: 48px;
}

.page p {
  margin: 146px 0 0;
  text-align: center;
  font-size: 22px;
  line-height: 28px;
}

table {
  width: 461px;
  margin: 140px auto 0;
  border-collapse: collapse;
}

tr {
  height: 44px;
}

th {
  width: 127px;
  padding: 0 10px 4px 7px;
  font-size: 22px;
  font-weight: 400;
  line-height: 28px;
  white-space: nowrap;
  border: 1px dashed #c4c4c4;
}

th div {
  display: flex;
  justify-content: space-between;
}

td {
  padding: 0;
  border: 1px dashed #c4c4c4;
  border-bottom: 1px solid #000;
}

.scroll {
  display: flex;
  flex-direction: column;
  width: 24px;
}

.ruler-btn {
  width: 20px;
  height: 28px;
  justify-content: center;
  background: #fff;
}

.track {
  display: flex;
  flex: 1;
  flex-direction: column;
  background: #e8eaf0;
}

.track button {
  flex-direction: column;
  width: 21px;
  height: 27px;
  justify-content: center;
}

.track .caret {
  background: #8e94a8;
}

.thumb {
  width: 20px;
  height: 55px;
  margin: 3px 0 0 1px;
  border-radius: 8px;
  background: #d2d5da;
}

.jump {
  margin-top: auto;
  padding-bottom: 5px;
}

.box {
  width: 9px;
  height: 9px;
  border: 2px solid #8e94a8;
  border-radius: 2px;
}

.side {
  display: flex;
  flex-direction: column;
  align-items: center;
  width: 64px;
  padding-right: 2px;
}

.grip {
  width: 30px;
  height: 5px;
  margin: 16px 0 18px;
  border: solid #c9ccd2;
  border-width: 1px 0;
}

.side button {
  height: 54px;
}

.side .dots {
  width: 60px;
  height: 68px;
  justify-content: center;
  margin-top: auto;
  border-top: 1px solid #e0e3e7;
}

.dots svg {
  margin-top: 10px;
}

/* status bar */
.status {
  display: flex;
  align-items: center;
  flex: none;
  height: 43px;
  padding: 0 23px 0 14px;
  border-top: 1px solid #dde3e8;
  background: #f5f7f9;
  z-index: 2;
}

.page-no {
  width: 94px;
  border-right: 1px solid #e1e4e8;
}

.words {
  width: 121px;
  padding-left: 13px;
  white-space: nowrap;
}

.spell, .proof, .missing {
  height: 36px;
  gap: 4px;
}

.spell {
  width: 111px;
  padding-left: 6px;
  background: #e9f0f9;
}

.proof {
  height: 26px;
  margin-left: 8px;
  padding-left: 12px;
  gap: 5px;
  border-left: 1px solid #e1e4e8;
}

.compat {
  width: 109px;
  padding-left: 28px;
  border-right: 1px solid #e1e4e8;
}

.missing {
  margin-left: 18px;
}

.views {
  display: flex;
  align-items: center;
  margin-left: auto;
}

.views button {
  width: 39px;
  height: 36px;
  justify-content: center;
}

.views .bar {
  margin: 0 9px;
}

.views .on {
  width: 34px;
  margin-right: 4px;
  background: #d9dfe5;
  border-radius: 2px;
}

.percent {
  width: 72px;
  margin-left: 2px;
  gap: 10px;
}

.status input {
  width: 206px;
  height: 20px;
  margin: 0 18px;
  appearance: none;
  background: linear-gradient(90deg, #4d5566 68px, #cdd1d6 68px) center / 100% 2px no-repeat;
}

.status input::-webkit-slider-thumb {
  appearance: none;
  width: 19px;
  height: 19px;
  border: 2px solid #555c6a;
  border-radius: 50%;
  background: #ebebeb;
}

.expand {
  margin-left: 17px;
}

/* taskbar */
.taskbar {
  display: flex;
  align-items: center;
  flex: none;
  height: 60px;
  padding-left: 24px;
  background: linear-gradient(90deg, #242f3e, #293545 60%, #222 85%);
  color: #fff;
}

.swirl {
  margin: 0 22px 0 46px;
}

.search {
  display: flex;
  align-items: center;
  width: 275px;
  height: 43px;
  padding-left: 8px;
  gap: 3px;
  background: #eee;
  color: #000;
  font-size: 15px;
}

.search input {
  flex: 1;
  min-width: 0;
  padding-left: 4px;
}

.search button {
  width: 70px;
  height: 43px;
  justify-content: center;
  background: #2289ff;
  color: #fff;
}

.split {
  width: 5px;
  height: 36px;
  margin-left: 11px;
  border: solid #4a5564;
  border-width: 0 1px;
}

.apps {
  display: flex;
  margin-left: 23px;
  gap: 13px;
}

.apps button {
  width: 62px;
  height: 60px;
  justify-content: center;
  padding-top: 3px;
  border-bottom: 3px solid transparent;
}

.apps .open {
  border-color: #76b9ed;
}

.apps .focus {
  width: 74px;
  margin-left: -5px;
  background: #54606e;
}

.weather {
  position: relative;
  display: flex;
  align-items: center;
  margin-left: auto;
  gap: 13px;
}

.temp {
  width: 82px;
  font-size: 20px;
  white-space: nowrap;
}

/* load readout sits over the weather text */
.cpu {
  position: absolute;
  left: 43px;
  top: -11px;
  display: flex;
  flex-direction: column;
  align-items: center;
  white-space: nowrap;
}

.tray {
  display: flex;
  align-items: center;
}

.tray button {
  width: 36px;
  height: 36px;
  justify-content: center;
}

.tray svg {
  width: 24px;
  height: 24px;
}

.tray .qpin {
  width: 50px;
}

.clock {
  display: flex;
  flex-direction: column;
  align-items: center;
  width: 90px;
  margin: 0 29px 0 15px;
  white-space: nowrap;
}

.notice {
  position: relative;
  width: 44px;
  height: 60px;
  margin-right: 7px;
  border-right: 1px solid #777;
}

.badge {
  position: absolute;
  left: 16px;
  top: 29px;
  width: 19px;
  height: 20px;
  background: #e00b0b;
  font-size: 14px;
  line-height: 20px;
  text-align: center;
}

/* floating widgets */
.meter-left, .meter-right {
  position: absolute;
  z-index: 3;
}

.meter-left {
  left: 3px;
  top: 10px;
  width: 12px;
  height: 85px;
  padding: 72px 2px 0;
  border-radius: 5px;
  background: linear-gradient(#243763 35px, #68696c 35px);
}

.meter-left i {
  display: block;
  height: 10px;
  background: repeating-linear-gradient(#5fcf70 0 1px, #4d6b52 1px 3px);
}

.meter-right {
  right: 0;
  top: 219px;
  width: 14px;
  height: 89px;
  padding: 9px 3px 0 6px;
  border-radius: 5px 0 0 5px;
  background: #4d5160;
}

.meter-right i {
  display: block;
  height: 70px;
  background: repeating-linear-gradient(transparent 0 2px, #3b3f4b 2px 3px), linear-gradient(#333844 27px, #c9c45b 27px, #3fc2a5);
}

.pointer {
  position: absolute;
  left: 216px;
  top: 612px;
}
```
